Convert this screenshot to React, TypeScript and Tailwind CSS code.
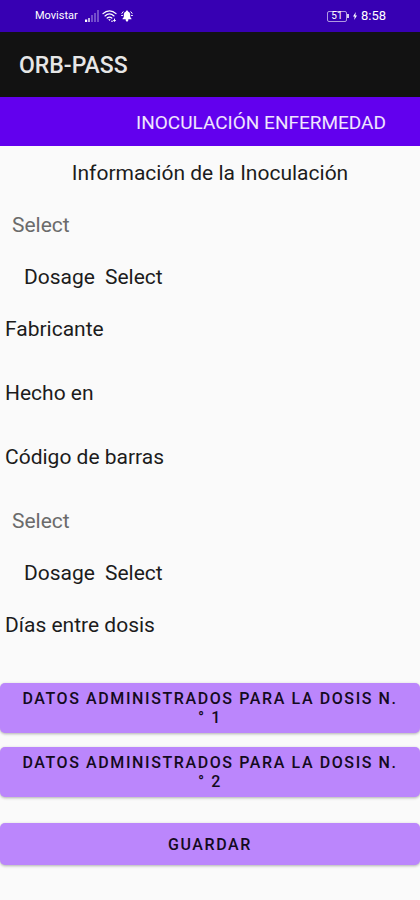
import { useState } from 'react'

interface PickerProps {
  id: string
  label: string
  className: string
}

interface DoseSectionProps {
  id: string
}

const facts = ['Fabricante', 'Hecho en', 'Código de barras']

function SignalIcon() {
  return (
    <svg className="h-3 w-[14px]" viewBox="0 0 14 12" fill="#fff" aria-hidden="true">
      <path d="M0 9.500h2.200V12H0z" />
      <path d="M3 8h2v4H3z" opacity="0.7" />
      <path d="M6 5h2v7H6zM9 3h2v9H9zM12 0h2v12h-2z" opacity="0.3" />
    </svg>
  )
}

function WifiIcon() {
  return (
    <svg className="h-3 w-4" viewBox="0 0 16 12" fill="none" stroke="#fff" strokeWidth="1.3" strokeLinecap="round" aria-hidden="true">
      <path d="M1 3.600C4.800 0 10.200 0 14 3.600" />
      <path d="M3 5.900c2.800-2.500 6.200-2.500 9 0" />
      <path d="M5.200 8.100c1.400-1.200 3.200-1.200 4.600 0" />
      <path d="M6.200 9.200l1.300 1.800 1.300-1.800z" fill="#fff" stroke="none" />
      <path d="M9.500 11.200h1M12.500 9v2.300l-1-1M12.500 11.300l1-1" strokeWidth="1" />
    </svg>
  )
}

function BellIcon() {
  return (
    <svg className="h-3 w-3" viewBox="0 0 12 12" fill="#fff" aria-hidden="true">
      <path d="M6 .6c.7 0 1 .4 1 .9C8.500 2 9.200 3.200 9.200 4.700V7l1.300 1.700v.6h-9v-.6L2.800 7V4.700C2.800 3.200 3.500 2 5 1.500c0-.5.3-.9 1-.9z" />
      <path d="M4.700 9h2.600v1c-.1 1-.6 1.500-1.300 1.500S4.800 11 4.700 10z" />
      <path d="M2.100 1.800L.9 3.400M9.900 1.800l1.200 1.600M1.500 5.500H.6M10.500 5.500h.9" fill="none" stroke="#fff" strokeWidth="1" strokeLinecap="round" />
    </svg>
  )
}

function StatusBar() {
  return (
    <div className="flex h-8 items-center justify-between bg-[#3700b3] pr-[34px] pl-[35px] text-white">
      <div className="flex items-center gap-[3px]">
        <span className="mr-1 text-[11px] leading-4">Movistar</span>
        <SignalIcon />
        <WifiIcon />
        <BellIcon />
      </div>
      <div className="flex items-center gap-1">
        <div className="flex items-center">
          <span className="flex h-[11px] w-5 items-center justify-center rounded-xs border border-white/60 text-[10px] leading-none">51</span>
          <span className="h-1 w-0.5 bg-white/80" />
        </div>
        <svg className="h-2 w-1" viewBox="0 0 4 8" fill="#fff" aria-hidden="true">
          <path d="M2.800 0L0 4.500h1.700L1.200 8 4 3.400H2.300z" />
        </svg>
        <span className="text-[13px] leading-4">8:58</span>
      </div>
    </div>
  )
}

function Picker({ id, label, className }: PickerProps) {
  const [value, setValue] = useState('')

  return (
    <select
      id={id}
      aria-label={label}
      value={value}
      onChange={(e) => setValue(e.target.value)}
      className={`appearance-none bg-transparent outline-none ${className}`}
    >
      <option value="">Select</option>
    </select>
  )
}

function DoseSection({ id }: DoseSectionProps) {
  return (
    <>
      <div className="flex h-[52px] items-center px-3">
        <Picker id={`${id}-type`} label="Tipo" className="w-full text-[#6b6b6b]" />
      </div>
      <div className="flex h-[52px] items-center gap-[10px] px-6">
        <label htmlFor={`${id}-dosage`}>Dosage</label>
        <Picker id={`${id}-dosage`} label="Dosage" className="flex-1" />
      </div>
    </>
  )
}

export default function App() {
  return (
    <div className="min-h-screen bg-[#fafafa] pb-8 font-[Roboto,sans-serif] text-[21px] leading-6 text-[#1c1c1c]">
      <StatusBar />

      <header className="flex h-[65px] items-center bg-[#121212] px-[19px] pt-0.5">
        <h1 className="text-[23px] font-medium text-[#e6e6e6]">ORB-PASS</h1>
      </header>

      <nav className="flex h-[49px] items-center justify-end bg-[#6200ee] px-[34px] pt-0.5">
        <a href="#enfermedad" className="text-[19px] text-white/90 uppercase">
          Inoculación enfermedad
        </a>
      </nav>

      <main>
        <h2 className="flex h-[53px] items-center justify-center">Información de la Inoculación</h2>

        <DoseSection id="first" />
        {facts.map((fact) => (
          <p key={fact} className="mb-3 flex h-[52px] items-center px-[5px]">
            {fact}
          </p>
        ))}

        <DoseSection id="second" />
        <p className="flex h-[52px] items-center px-[5px]">Días entre dosis</p>

        {/* Actions */}
        <div className="mt-8 flex flex-col text-base leading-[19px] font-medium tracking-widest text-[#140a20] uppercase">
          {[1, 2].map((dose) => (
            <button
              key={dose}
              type="button"
              className="mb-[14px] rounded-[5px] bg-[#bb86fc] px-4 py-[6px] tracking-widest uppercase shadow-[0_1px_3px_rgba(0,0,0,0.3)]"
            >
              Datos administrados para la dosis N.
              <br />° {dose}
            </button>
          ))}
          <button
            type="button"
            className="mt-3 h-[42px] rounded-[5px] bg-[#bb86fc] px-4 tracking-widest uppercase shadow-[0_1px_3px_rgba(0,0,0,0.3)]"
          >
            Guardar
          </button>
        </div>
      </main>
    </div>
  )
}
